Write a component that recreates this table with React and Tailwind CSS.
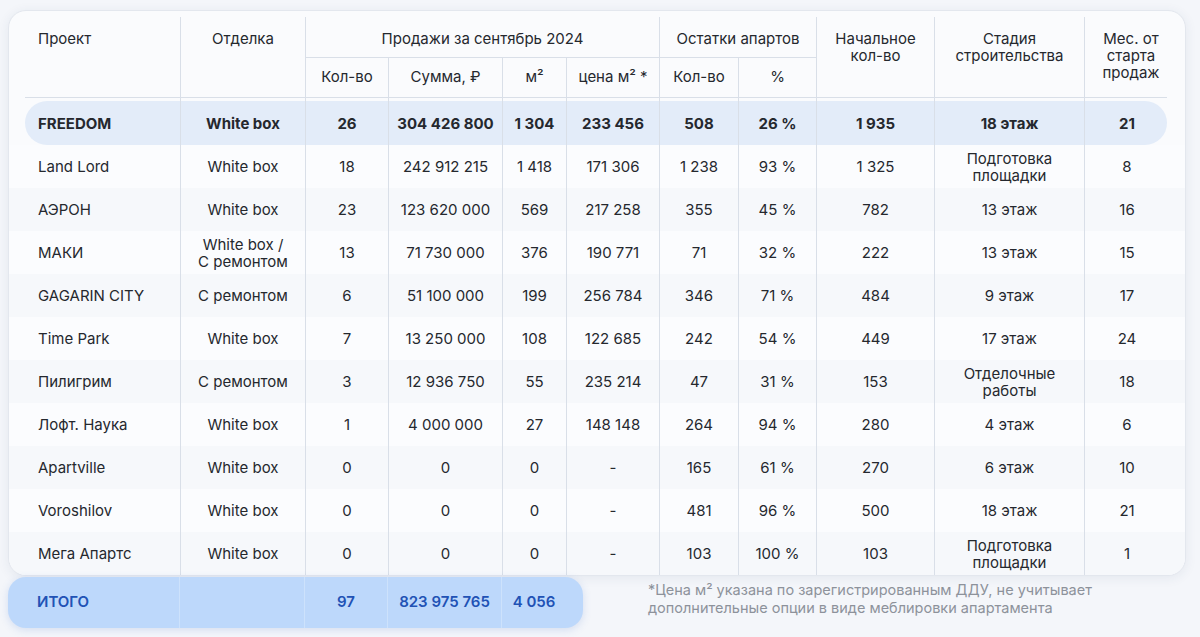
import React from 'react';

const COLS = 'grid grid-cols-[156px_125px_83px_114px_64px_93px_79px_78px_118px_150px_84px]';

const rows = [
  ['Land Lord', 'White box', '18', '242 912 215', '1 418', '171 306', '1 238', '93 %', '1 325', 'Подготовка\nплощадки', '8'],
  ['АЭРОН', 'White box', '23', '123 620 000', '569', '217 258', '355', '45 %', '782', '13 этаж', '16'],
  ['МАКИ', 'White box /\nС ремонтом', '13', '71 730 000', '376', '190 771', '71', '32 %', '222', '13 этаж', '15'],
  ['GAGARIN CITY', 'С ремонтом', '6', '51 100 000', '199', '256 784', '346', '71 %', '484', '9 этаж', '17'],
  ['Time Park', 'White box', '7', '13 250 000', '108', '122 685', '242', '54 %', '449', '17 этаж', '24'],
  ['Пилигрим', 'С ремонтом', '3', '12 936 750', '55', '235 214', '47', '31 %', '153', 'Отделочные\nработы', '18'],
  ['Лофт. Наука', 'White box', '1', '4 000 000', '27', '148 148', '264', '94 %', '280', '4 этаж', '6'],
  ['Apartville', 'White box', '0', '0', '0', '-', '165', '61 %', '270', '6 этаж', '10'],
  ['Voroshilov', 'White box', '0', '0', '0', '-', '481', '96 %', '500', '18 этаж', '21'],
  ['Мега Апартс', 'White box', '0', '0', '0', '-', '103', '100 %', '103', 'Подготовка\nплощадки', '1'],
];

const freedom = ['FREEDOM', 'White box', '26', '304 426 800', '1 304', '233 456', '508', '26 %', '1 935', '18 этаж', '21'];

function Cells({ data }) {
  return data.map((v, i) => (
    <div
      key={i}
      className={
        'flex items-center whitespace-pre-line leading-[17px] ' +
        (i === 0 ? 'justify-start pl-[13px] ' : 'justify-center text-center ') +
        (i < data.length - 1 ? 'border-r border-[#d9dfe8]' : '')
      }
    >
      {v}
    </div>
  ));
}

export default function App() {
  return (
    <div
      className="min-h-screen bg-[#f4f6fa] pt-[10px] text-[15px] text-[#25282e]"
      style={{ fontFamily: 'Inter, "Noto Sans", sans-serif' }}
    >
      <div className="ml-2 w-[1178px] rounded-[18px] border border-[#e3e7ee] bg-[#fafbfd] pt-[6px] shadow-[0_2px_12px_rgba(40,60,100,0.08)] overflow-hidden">
        {/* header */}
        <div className="ml-4 mr-[18px]">
          <div className={COLS + ' grid-rows-[41px_39px] border-b border-[#d9dfe8]'}>
            <div className="row-span-2 border-r border-[#d9dfe8] pl-[13px] pt-[13px] leading-[17px]">Проект</div>
            <div className="row-span-2 border-r border-[#d9dfe8] pt-[13px] text-center leading-[17px]">Отделка</div>
            <div className="col-span-4 border-r border-b border-[#d9dfe8] pt-[13px] text-center leading-[17px]">Продажи за сентябрь 2024</div>
            <div className="col-span-2 border-r border-b border-[#d9dfe8] pt-[13px] text-center leading-[17px]">Остатки апартов</div>
            <div className="row-span-2 border-r border-[#d9dfe8] pt-[13px] text-center leading-[17px]">Начальное<br />кол-во</div>
            <div className="row-span-2 border-r border-[#d9dfe8] pt-[13px] text-center leading-[17px]">Стадия<br />строительства</div>
            <div className="row-span-2 pl-[8px] pt-[13px] text-center leading-[17px]">Мес. от<br />старта<br />продаж</div>
            <div className="flex items-center justify-center border-r border-[#d9dfe8]">Кол-во</div>
            <div className="flex items-center justify-center border-r border-[#d9dfe8]">Сумма, ₽</div>
            <div className="flex items-center justify-center border-r border-[#d9dfe8]">м²</div>
            <div className="flex items-center justify-center border-r border-[#d9dfe8]">цена м² *</div>
            <div className="flex items-center justify-center border-r border-[#d9dfe8]">Кол-во</div>
            <div className="flex items-center justify-center border-r border-[#d9dfe8]">%</div>
          </div>
          <div className={COLS + ' h-[3px]'}>
            <Cells data={['', '', '', '', '', '', '', '', '', '', '']} />
          </div>
          <div className={COLS + ' h-[44px] rounded-full bg-[#e3ecf9] font-bold'}>
            <Cells data={freedom} />
          </div>
        </div>

        {/* body */}
        {rows.map((r, i) => (
          <div key={i} className={i % 2 === 1 ? 'bg-[#f6f8fb]' : 'bg-[#fbfcfe]'}>
            <div className={'ml-4 mr-[18px] h-[43px] ' + COLS}>
              <Cells data={r} />
            </div>
          </div>
        ))}
      </div>

      {/* totals + note */}
      <div className="flex items-start">
        <div className="ml-2 mt-[1px] flex h-[51px] w-[575px] rounded-[18px] bg-[#bdd8fb] font-semibold text-[#2152b5] shadow-[0_2px_8px_rgba(60,110,200,0.18)]">
          <div className="grid grid-cols-[172px_125px_83px_114px_64px]">
            <div className="flex items-center border-r border-[#cde2fc] pl-[29px]">ИТОГО</div>
            <div className="border-r border-[#cde2fc]"></div>
            <div className="flex items-center justify-center border-r border-[#cde2fc]">97</div>
            <div className="flex items-center justify-center border-r border-[#cde2fc]">823 975 765</div>
            <div className="flex items-center justify-center">4 056</div>
          </div>
        </div>
        <p className="ml-[65px] mt-[5px] text-[14.5px] leading-[18px] text-[#8d929b]">
          *Цена м² указана по зарегистрированным ДДУ, не учитывает
          <br />
          дополнительные опции в виде меблировки апартамента
        </p>
      </div>
    </div>
  );
}
